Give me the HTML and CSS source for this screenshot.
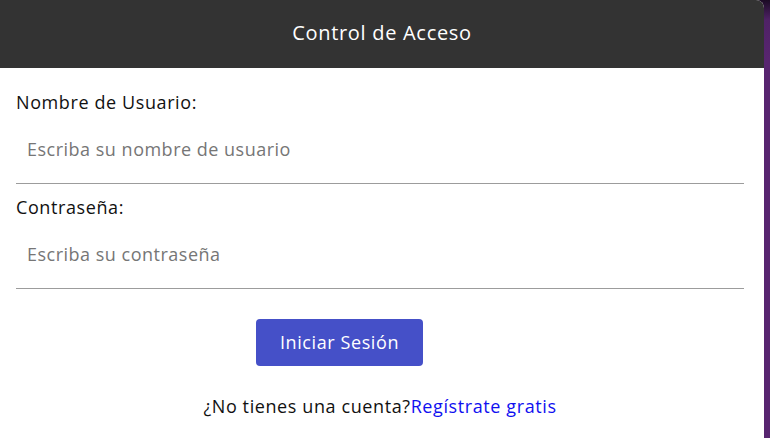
FILE: index.html
```html
<!DOCTYPE html>
<html lang="es">
<head>
<meta charset="utf-8">
<title>Control de Acceso</title>
<link rel="stylesheet" href="styles.css">
</head>
<body>
<div class="card">
  <header class="card-header">Control de Acceso</header>
  <form class="form">
    <label class="label" for="user">Nombre de Usuario:</label>
    <input class="input" id="user" type="text" placeholder="Escriba su nombre de usuario">
    <label class="label" for="pass">Contraseña:</label>
    <input class="input" id="pass" type="password" placeholder="Escriba su contraseña">
    <div class="actions">
      <button class="btn" type="button">Iniciar Sesión</button>
    </div>
    <p class="signup">¿No tienes una cuenta?<a class="link" href="#">Regístrate gratis</a></p>
  </form>
</div>
</body>
</html>
```
FILE: styles.css
```css
html, body {
  margin: 0;
  height: 100%;
}
body {
  background: linear-gradient(180deg, #1b0b24 0px, #4f2266 20px, #582570 60px, #582570 100%);
  font-family: "Open Sans", "Noto Sans", sans-serif;
  letter-spacing: 0.6px;
  overflow: hidden;
}
.card {
  width: 764px;
  height: 100%;
  background: #fff;
  border-top-right-radius: 8px;
  overflow: hidden;
}
.card-header {
  box-sizing: border-box;
  height: 68px;
  padding-bottom: 4px;
  background: #333333;
  color: #fff;
  font-size: 20px;
  letter-spacing: 0.7px;
  display: flex;
  align-items: center;
  justify-content: center;
}
.form {
  padding: 11px 20px 0 16px;
  display: flex;
  flex-direction: column;
}
.label {
  display: block;
  margin: 11px 0 2px;
  font-size: 18px;
  line-height: 25px;
  color: #111;
}
.input {
  box-sizing: border-box;
  height: 67px;
  border: none;
  border-bottom: 1px solid #9c9c9c;
  padding: 0 11px 3px;
  font-family: inherit;
  font-size: 18px;
  letter-spacing: 0.5px;
  color: #222;
  outline: none;
  background: transparent;
}
.input::placeholder {
  color: #767676;
}
.actions {
  margin-top: 30px;
  padding-left: 240px;
}
.btn {
  width: 167px;
  height: 47px;
  padding: 0 0 2px;
  border: none;
  border-radius: 4px;
  background: #4550c8;
  color: #fff;
  font-family: inherit;
  font-size: 18px;
  letter-spacing: 0.6px;
}
.signup {
  margin: 27px 0 0;
  text-align: center;
  font-size: 18px;
  line-height: 27px;
  color: #111;
}
.link {
  color: #1010f0;
  text-decoration: none;
}
```
